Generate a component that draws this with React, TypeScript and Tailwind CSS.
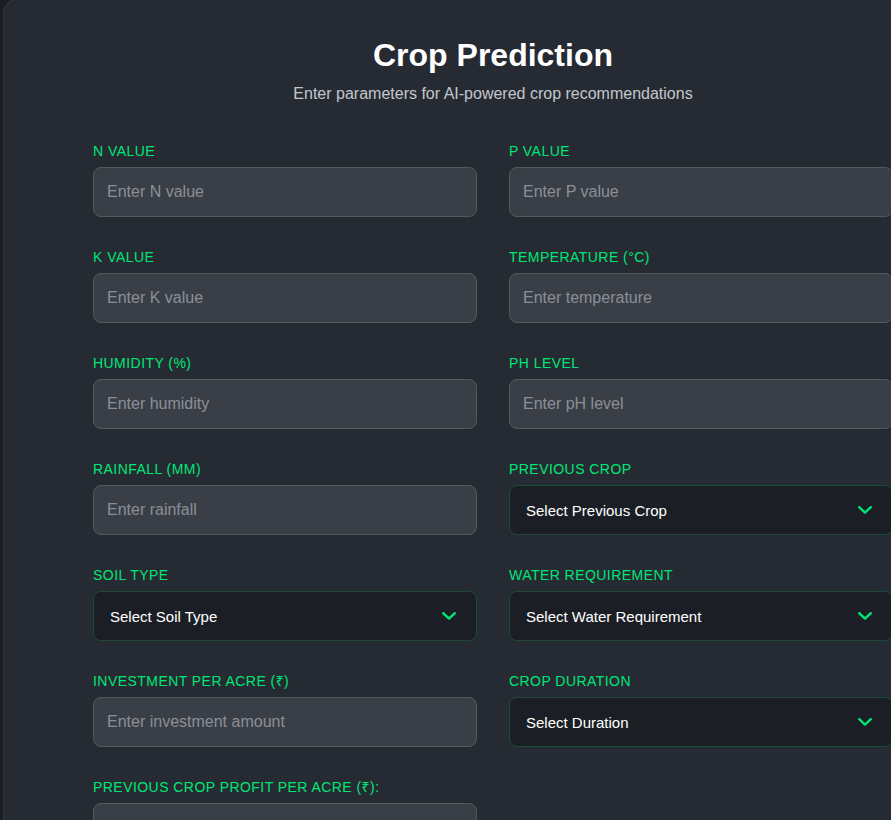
import React from "react";

type Field =
  | { kind: "input"; label: string; placeholder: string }
  | { kind: "select"; label: string; placeholder: string };

const fields: Field[] = [
  { kind: "input", label: "N Value", placeholder: "Enter N value" },
  { kind: "input", label: "P Value", placeholder: "Enter P value" },
  { kind: "input", label: "K Value", placeholder: "Enter K value" },
  { kind: "input", label: "Temperature (°C)", placeholder: "Enter temperature" },
  { kind: "input", label: "Humidity (%)", placeholder: "Enter humidity" },
  { kind: "input", label: "pH Level", placeholder: "Enter pH level" },
  { kind: "input", label: "Rainfall (mm)", placeholder: "Enter rainfall" },
  { kind: "select", label: "Previous Crop", placeholder: "Select Previous Crop" },
  { kind: "select", label: "Soil Type", placeholder: "Select Soil Type" },
  { kind: "select", label: "Water Requirement", placeholder: "Select Water Requirement" },
  { kind: "input", label: "Investment per Acre (₹)", placeholder: "Enter investment amount" },
  { kind: "select", label: "Crop Duration", placeholder: "Select Duration" },
  { kind: "input", label: "Previous Crop Profit per Acre (₹):", placeholder: "Enter previous profit" },
];

function Chevron() {
  return (
    <svg width="14" height="8" viewBox="0 0 14 8" fill="none" className="shrink-0">
      <polyline
        points="1.2,1.2 7,6.6 12.8,1.2"
        stroke="#00e676"
        strokeWidth="2.4"
        strokeLinecap="round"
        strokeLinejoin="round"
      />
    </svg>
  );
}

function FormField({ field }: { field: Field }) {
  return (
    <div className="flex flex-col">
      <label className="mb-[6px] text-[14px] leading-5 uppercase tracking-[0.45px] text-[#00e676]">
        {field.label}
      </label>
      {field.kind === "input" ? (
        <input
          type="text"
          placeholder={field.placeholder}
          className="h-[50px] w-full rounded-lg border border-[#545960] bg-[#3a3f47] px-[13px] text-[16px] text-white placeholder:text-[#8a8f96] outline-none"
        />
      ) : (
        <div className="flex h-[50px] w-full items-center justify-between rounded-lg border border-[#1c4a35] bg-[#1b1f25] pl-[16px] pr-[20px] text-[15px] text-white">
          <span className="pt-[2px]">{field.placeholder}</span>
          <Chevron />
        </div>
      )}
    </div>
  );
}

export default function App() {
  return (
    <div
      className="h-screen w-full overflow-hidden bg-[#1b1e23]"
      style={{ fontFamily: '"Liberation Sans", Arial, "Noto Sans", sans-serif' }}
    >
      <div className="-mt-[2px] ml-[3px] w-[980px] min-h-[900px] rounded-2xl border border-white/5 bg-[#262b33] px-[89px] pt-[36px]">
        <div className="text-center">
          <h1 className="text-[32px] font-bold leading-10 text-white">Crop Prediction</h1>
          <p className="mt-[7px] text-[16px] leading-6 text-[#c3c7cc]">
            Enter parameters for AI-powered crop recommendations
          </p>
        </div>

        <form className="mt-[35px] grid grid-cols-2 gap-x-8 gap-y-[30px]">
          {fields.map((f) => (
            <FormField key={f.label} field={f} />
          ))}
        </form>
      </div>
    </div>
  );
}
